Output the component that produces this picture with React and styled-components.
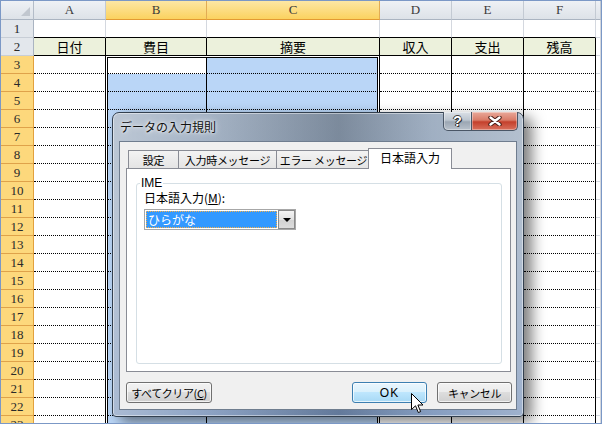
import React from "react";
import styled, { createGlobalStyle, css } from "styled-components";

const GlobalStyle = createGlobalStyle`
  html, body {
    margin: 0;
    padding: 0;
    background: #fff;
  }
  body {
    font-family: "Liberation Sans", "Noto Sans CJK JP", sans-serif;
  }
`;

const COLS = [
  { key: "A", width: 72, title: "日付" },
  { key: "B", width: 101, title: "費目", selected: true },
  { key: "C", width: 173, title: "摘要", selected: true },
  { key: "D", width: 72, title: "収入" },
  { key: "E", width: 72, title: "支出" },
  { key: "F", width: 72, title: "残高" },
];
const ROWS = Array.from({ length: 23 }, (_, i) => i + 1);

const GRID = "#d4d8df";
const lineFor = kind =>
  kind === "solid"
    ? "1px solid #000"
    : kind === "dotted"
    ? "1px dotted #000"
    : `1px solid ${GRID}`;

// ---------- sheet ----------

const Window = styled.div`
  position: relative;
  width: 602px;
  height: 424px;
  box-sizing: border-box;
  border: 1px solid #7b98c6;
  overflow: hidden;
  background: #fff;
`;

const Sheet = styled.div`
  display: grid;
  grid-template-columns: 33px ${COLS.map(c => c.width + "px").join(" ")} 1fr;
  grid-template-rows: 19px repeat(${ROWS.length}, 18px);
`;

const Corner = styled.div`
  position: relative;
  box-sizing: border-box;
  background: linear-gradient(#eef1f5, #dde2e8);
  border-right: 1px solid #b3bcc8;
  border-bottom: 1px solid #aab4c1;
`;

const CornerMark = styled.div`
  position: absolute;
  right: 3px;
  bottom: 3px;
  width: 0;
  height: 0;
  border-left: 9px solid transparent;
  border-bottom: 9px solid #c1c7cf;
`;

const ColHead = styled.div`
  box-sizing: border-box;
  display: flex;
  align-items: center;
  justify-content: center;
  font: 13px "Liberation Serif", serif;
  color: #3a3a3a;
  background: linear-gradient(#eef1f5, #dde2e8);
  border-right: 1px solid #c3cad3;
  border-bottom: 1px solid #aab4c1;

  ${p =>
    p.$active &&
    css`
      background: linear-gradient(#fde7a4, #fbd25f);
      border-right-color: #e2ac54;
      border-bottom-color: #e39a32;
    `}
`;

const RowHead = styled.div`
  box-sizing: border-box;
  display: flex;
  align-items: center;
  justify-content: center;
  padding-top: 1px;
  font: 13px "Liberation Serif", serif;
  color: #2a2a2a;
  background: #e3e7ec;
  border-right: 1px solid #aab4c1;
  border-bottom: 1px solid #c8ced6;

  ${p =>
    p.$active &&
    css`
      background: #fdd87c;
      border-right-color: #e2a13e;
      border-bottom-color: #dfa24a;
    `}
`;

const Cell = styled.div`
  box-sizing: border-box;
  display: flex;
  align-items: flex-end;
  justify-content: center;
  font: 13px/16px "Noto Sans CJK JP", sans-serif;
  color: #000;
  background: ${p => p.$bg || "#fff"};
  border-right: ${p => lineFor(p.$right)};
  border-bottom: ${p => lineFor(p.$bottom)};
`;

const Selection = styled.div`
  position: absolute;
  left: 104px;
  top: 54px;
  width: 275px;
  height: 400px;
  box-sizing: border-box;
  border: 1px solid #000;
  box-shadow: inset 0 0 0 1px #fff, inset 0 0 0 2px #000;
  pointer-events: none;
`;

const cellProps = (row, ci) => {
  if (row === 1) return { $right: "grid", $bottom: "solid" };
  if (row === 2) return { $right: "solid", $bottom: "solid", $bg: "#ecf1dc" };
  const inSel = (ci === 1 || ci === 2) && !(row === 3 && ci === 1);
  return {
    $right: "solid",
    $bottom: "dotted",
    $bg: inSel ? "#bad6f7" : "#fff",
  };
};

// ---------- dialog ----------

const Dialog = styled.div`
  position: absolute;
  left: 111px;
  top: 111px;
  width: 412px;
  height: 305px;
  box-sizing: border-box;
  display: flex;
  flex-direction: column;
  padding: 0 6px 6px;
  border: 1px solid #33404f;
  border-radius: 7px 7px 4px 4px;
  background: linear-gradient(
      90deg,
      rgba(255, 255, 255, 0.38) 0%,
      rgba(255, 255, 255, 0.18) 22%,
      rgba(0, 0, 0, 0.16) 55%,
      rgba(255, 255, 255, 0.12) 78%,
      rgba(255, 255, 255, 0.3) 100%
    ),
    linear-gradient(180deg, #94a5ba 0%, #8ea2bb 45%, #7590b8 100%);
  box-shadow: inset 0 0 0 1px rgba(255, 255, 255, 0.45),
    8px 5px 14px rgba(0, 0, 0, 0.5);
  font-family: "Liberation Sans", "Noto Sans CJK JP", sans-serif;
  font-size: 12px;
  color: #000;
`;

const TitleBar = styled.div`
  height: 28px;
  display: flex;
  align-items: flex-start;
  justify-content: space-between;
`;

const Title = styled.div`
  padding: 6px 0 0 1px;
  font: 12px/16px "Noto Sans CJK JP", sans-serif;
  color: #111;
  text-shadow: 0 0 6px rgba(255, 255, 255, 0.9), 0 0 3px rgba(255, 255, 255, 0.9);
`;

const CaptionButtons = styled.div`
  display: flex;
  margin: -1px -1px 0 0;
`;

const CaptionButton = styled.div`
  height: 19px;
  width: ${p => (p.$close ? 46 : 29)}px;
  box-sizing: border-box;
  display: flex;
  align-items: center;
  justify-content: center;
  border: 1px solid #4a5666;
  border-top: none;
  font: bold 14px "Liberation Sans", sans-serif;
  color: #fff;
  text-shadow: 0 0 1px #222, 1px 1px 0 #333, -1px 0 0 #333, 0 -1px 0 #444;
  box-shadow: inset 0 0 0 1px rgba(255, 255, 255, 0.35);

  ${p =>
    p.$close
      ? css`
          border-left: none;
          border-radius: 0 0 5px 0;
          background: linear-gradient(#e9a899 0%, #d97c68 45%, #c4402c 55%, #d9705c 100%);
        `
      : css`
          border-radius: 0 0 0 5px;
          background: linear-gradient(#dbe0e6 0%, #bcc5cf 45%, #9ba6b3 55%, #b9c2cc 100%);
        `}
`;

const Client = styled.div`
  flex: 1;
  display: flex;
  flex-direction: column;
  padding: 6px 5px 0 6px;
  background: #f0f0f0;
  border: 1px solid #6f7d8f;
`;

const Tabs = styled.div`
  display: flex;
  align-items: flex-end;
  height: 20px;
  padding-left: 2px;
  position: relative;
  z-index: 1;
`;

const Tab = styled.div`
  box-sizing: border-box;
  width: ${p => p.$w}px;
  height: 18px;
  display: flex;
  align-items: center;
  justify-content: center;
  border: 1px solid #898c95;
  border-bottom: none;
  margin-right: -1px;
  background: linear-gradient(#f3f3f3, #e4e4e4);
  font: 11px/16px "Noto Sans CJK JP", sans-serif;
  letter-spacing: -0.3px;
  white-space: nowrap;

  ${p =>
    p.$active &&
    css`
      height: 21px;
      margin: 0 0 -1px -2px;
      padding-bottom: 2px;
      background: #fff;
      font-size: 12px;
      letter-spacing: 0;
    `}
`;

const Panel = styled.div`
  height: 204px;
  box-sizing: border-box;
  border: 1px solid #898c95;
  background: #fff;
  padding: 6px 8px 7px 9px;
  display: flex;
`;

const Group = styled.fieldset`
  flex: 1;
  margin: 0;
  padding: 0 7px;
  border: 1px solid #d5dfe5;
  border-radius: 3px;
`;

const Legend = styled.legend`
  margin-left: -4px;
  padding: 0 1px;
  font: 12px/16px "Liberation Sans", sans-serif;
`;

const FieldLabel = styled.div`
  font: 12px/16px "Noto Sans CJK JP", sans-serif;
  margin-top: -1px;

  u {
    text-decoration: underline;
    text-underline-offset: 1px;
  }
`;

const Combo = styled.div`
  margin-top: 3px;
  width: 152px;
  height: 21px;
  box-sizing: border-box;
  display: flex;
  border: 1px solid #a7a7a7;
  background: #fff;
  padding: 1px;
`;

const ComboValue = styled.div`
  flex: 1;
  display: flex;
  align-items: center;
  padding-left: 2px;
  background: #3399ff;
  color: #fff;
  outline: 1px dotted #f7b04a;
  outline-offset: -1px;
  font: 12px/15px "Noto Sans CJK JP", sans-serif;
`;

const ComboArrow = styled.div`
  width: 17px;
  margin: -1px -1px -1px 1px;
  box-sizing: border-box;
  display: flex;
  align-items: center;
  justify-content: center;
  border: 1px solid #8a8a8a;
  background: linear-gradient(#f4f4f4, #e2e2e2 50%, #d2d2d2 51%, #dcdcdc);
`;

const Arrow = styled.div`
  width: 0;
  height: 0;
  border-left: 4px solid transparent;
  border-right: 4px solid transparent;
  border-top: 4px solid #000;
`;

const ButtonRow = styled.div`
  display: flex;
  align-items: center;
  margin-top: 10px;
  width: 386px;
`;

const ButtonGroup = styled.div`
  margin-left: auto;
  display: flex;
  gap: 10px;
`;

const Button = styled.div`
  width: ${p => p.$w}px;
  height: 21px;
  box-sizing: border-box;
  display: flex;
  align-items: center;
  justify-content: center;
  border: 1px solid #707070;
  border-radius: 3px;
  background: linear-gradient(#f2f2f2 0%, #ebebeb 49%, #dddddd 50%, #cfcfcf 100%);
  box-shadow: inset 0 0 0 1px rgba(255, 255, 255, 0.7);
  font: 11px/16px "Noto Sans CJK JP", sans-serif;
  letter-spacing: -0.4px;
  white-space: nowrap;

  u {
    text-decoration: underline;
    text-underline-offset: 1px;
  }

  ${p =>
    p.$hover &&
    css`
      border-color: #3c7fb1;
      background: linear-gradient(#eaf6fd 0%, #d9f0fc 49%, #bee6fd 50%, #a7d9f5 100%);
      font-family: "Liberation Sans", sans-serif;
      font-size: 12px;
      letter-spacing: 1px;
    `}
`;

const Cursor = styled.svg`
  position: absolute;
  left: 410px;
  top: 392px;
  pointer-events: none;
`;

const CloseIcon = () => (
  <svg width="14" height="10" viewBox="0 0 14 10">
    <path d="M2.5 1.5 L11.5 8.5 M11.5 1.5 L2.5 8.5" stroke="#4a1e16" strokeWidth="4.4" strokeLinecap="round" />
    <path d="M2.5 1.5 L11.5 8.5 M11.5 1.5 L2.5 8.5" stroke="#fff" strokeWidth="2.4" strokeLinecap="round" />
  </svg>
);

export default function App() {
  return (
    <>
      <GlobalStyle />
      <Window>
        <Sheet>
          <Corner>
            <CornerMark />
          </Corner>
          {COLS.map(c => (
            <ColHead key={c.key} $active={c.selected}>
              {c.key}
            </ColHead>
          ))}
          <ColHead />
          {ROWS.map(row => (
            <React.Fragment key={row}>
              <RowHead $active={row >= 3}>{row}</RowHead>
              {COLS.map((c, ci) => (
                <Cell key={c.key} {...cellProps(row, ci)}>
                  {row === 2 ? c.title : null}
                </Cell>
              ))}
              <Cell $right="grid" $bottom="grid" />
            </React.Fragment>
          ))}
        </Sheet>

        <Selection />

        <Dialog>
          <TitleBar>
            <Title>データの入力規則</Title>
            <CaptionButtons>
              <CaptionButton>?</CaptionButton>
              <CaptionButton $close>
                <CloseIcon />
              </CaptionButton>
            </CaptionButtons>
          </TitleBar>
          <Client>
            <Tabs>
              <Tab $w={51}>設定</Tab>
              <Tab $w={99}>入力時メッセージ</Tab>
              <Tab $w={95}>エラー メッセージ</Tab>
              <Tab $w={84} $active>
                日本語入力
              </Tab>
            </Tabs>
            <Panel>
              <Group>
                <Legend>IME</Legend>
                <FieldLabel>
                  日本語入力(<u>M</u>):
                </FieldLabel>
                <Combo>
                  <ComboValue>ひらがな</ComboValue>
                  <ComboArrow>
                    <Arrow />
                  </ComboArrow>
                </Combo>
              </Group>
            </Panel>
            <ButtonRow>
              <Button $w={86}>
                すべてクリア(<u>C</u>)
              </Button>
              <ButtonGroup>
                <Button $w={75} $hover>
                  OK
                </Button>
                <Button $w={75}>キャンセル</Button>
              </ButtonGroup>
            </ButtonRow>
          </Client>
        </Dialog>

        <Cursor width="14" height="22" viewBox="0 0 14 22">
          <path
            d="M0.5 0.5 L0.5 16.5 L4.5 12.8 L7.3 19.5 L9.6 18.6 L6.9 12 L12 12 Z"
            fill="#fff"
            stroke="#000"
            strokeWidth="1"
            strokeLinejoin="miter"
          />
        </Cursor>
      </Window>
    </>
  );
}
